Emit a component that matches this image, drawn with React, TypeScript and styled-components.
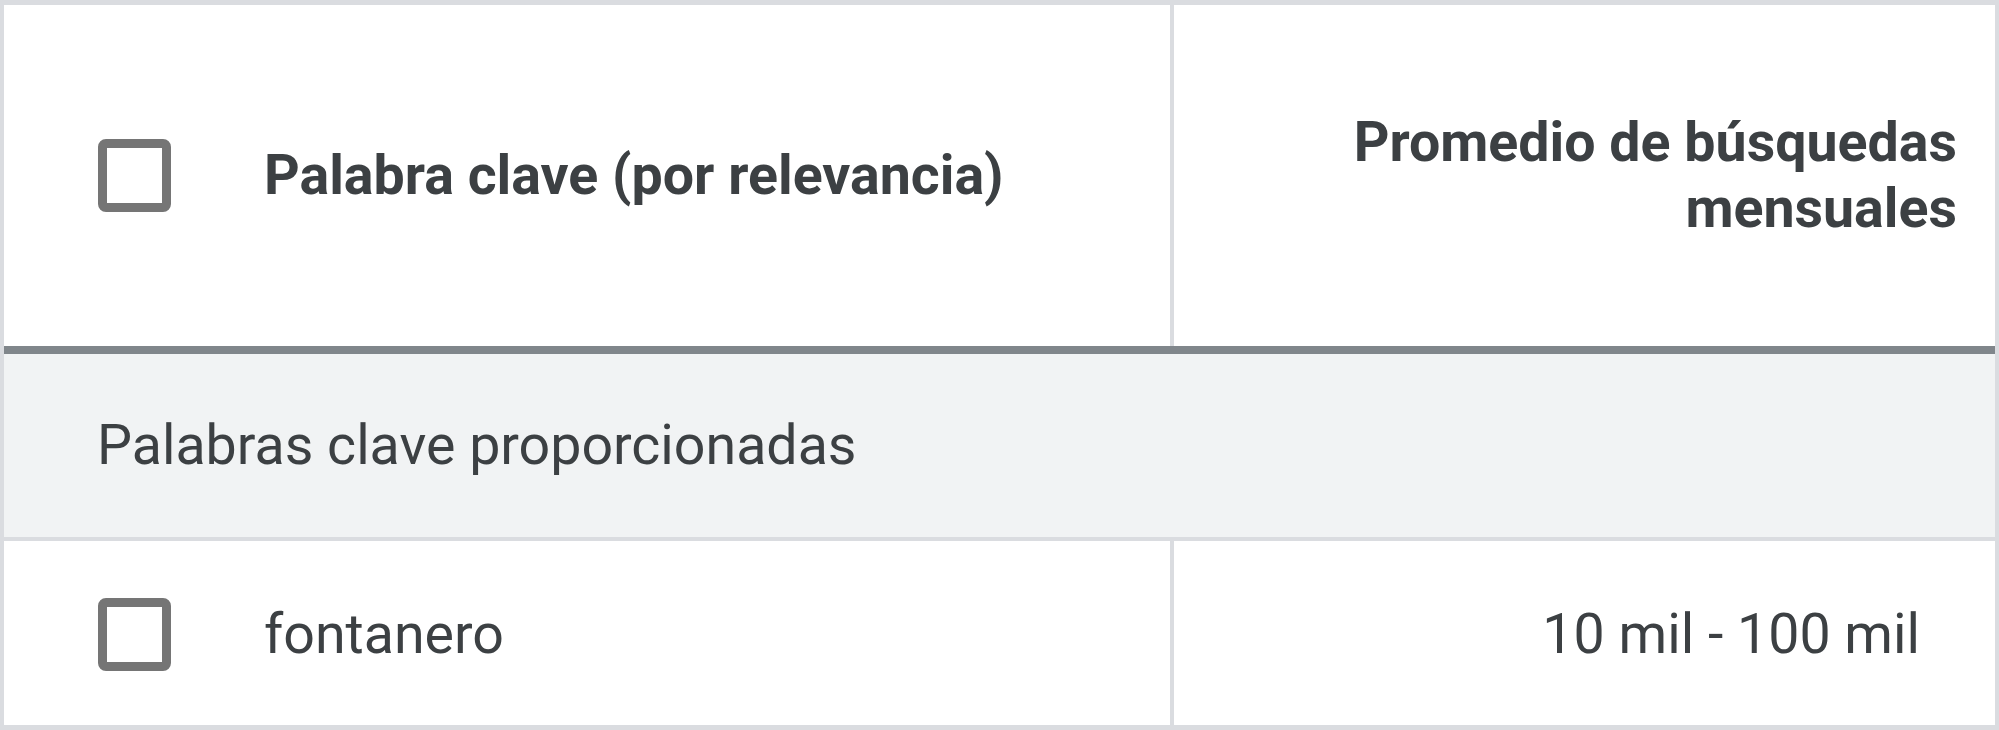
import React from "react";
import styled, { createGlobalStyle } from "styled-components";

const GlobalStyle = createGlobalStyle`
  html, body {
    margin: 0;
    padding: 0;
    background: #ffffff;
  }
  body {
    font-family: Roboto, "Liberation Sans", Arial, sans-serif;
    color: #3c4043;
  }
`;

const Table = styled.div`
  width: 1999px;
  height: 730px;
  box-sizing: border-box;
  border: 4px solid #dadce0;
  border-top-width: 5px;
  border-bottom-width: 5px;
  display: grid;
  grid-template-rows: 341px 8px 183px 4px 1fr;
  background: #ffffff;
`;

const Row = styled.div`
  display: grid;
  grid-template-columns: 1166px 1fr;
`;

const Rule = styled.div<{ thick?: boolean }>`
  background: ${({ thick }) => (thick ? "#80868b" : "#dadce0")};
`;

const Cell = styled.div<{ align?: "left" | "right"; padRight?: number; offset?: number }>`
  display: flex;
  align-items: center;
  justify-content: ${({ align }) => (align === "right" ? "flex-end" : "flex-start")};
  text-align: ${({ align }) => align ?? "left"};
  padding: ${({ offset }) => offset ?? 0}px ${({ padRight }) => padRight ?? 0}px 0 94px;
  box-sizing: border-box;
  gap: 93px;
  font-size: 55.5px;
  line-height: 66px;
  & + & {
    border-left: 4px solid #dadce0;
  }
`;

const HeaderText = styled.span`
  font-weight: 700;
`;

const GroupRow = styled.div`
  background: #f1f3f4;
  display: flex;
  align-items: center;
  padding-left: 93px;
  font-size: 55.5px;
  line-height: 66px;
`;

const Checkbox = styled.span`
  display: inline-block;
  flex: 0 0 auto;
  width: 73px;
  height: 73px;
  box-sizing: border-box;
  border: 9px solid #757575;
  border-radius: 8px;
  background: #ffffff;
`;

export default function App() {
  return (
    <>
      <GlobalStyle />
      <Table>
        <Row>
          <Cell>
            <Checkbox role="checkbox" aria-checked="false" />
            <HeaderText>Palabra clave (por relevancia)</HeaderText>
          </Cell>
          <Cell align="right" padRight={38}>
            <HeaderText>
              Promedio de búsquedas
              <br />
              mensuales
            </HeaderText>
          </Cell>
        </Row>
        <Rule thick />
        <GroupRow>Palabras clave proporcionadas</GroupRow>
        <Rule />
        <Row>
          <Cell offset={3}>
            <Checkbox role="checkbox" aria-checked="false" />
            <span>fontanero</span>
          </Cell>
          <Cell align="right" padRight={75} offset={3}>
            <span>10 mil - 100 mil</span>
          </Cell>
        </Row>
      </Table>
    </>
  );
}
